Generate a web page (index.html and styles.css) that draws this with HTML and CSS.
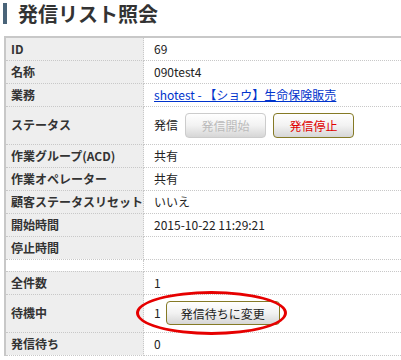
FILE: index.html
```html
<!DOCTYPE html>
<html lang="ja">
<head>
    <meta charset="UTF-8">
    <meta name="viewport" content="width=device-width, initial-scale=1.0">
    <title>発信リスト照会</title>
    <link rel="stylesheet" href="styles.css">
</head>
<body>
    <h1 class="page-title">発信リスト照会</h1>
    <table class="detail">
        <tr><th>ID</th><td>69</td></tr>
        <tr><th>名称</th><td>090test4</td></tr>
        <tr><th>業務</th><td><a href="#">shotest - 【ショウ】生命保険販売</a></td></tr>
        <tr class="tall">
            <th>ステータス</th>
            <td>
                <div class="status">
                    <span>発信</span>
                    <button class="btn disabled" disabled>発信開始</button>
                    <button class="btn stop">発信停止</button>
                </div>
            </td>
        </tr>
        <tr><th>作業グループ(ACD)</th><td>共有</td></tr>
        <tr><th>作業オペレーター</th><td>共有</td></tr>
        <tr><th>顧客ステータスリセット</th><td>いいえ</td></tr>
        <tr><th>開始時間</th><td>2015-10-22 11:29:21</td></tr>
        <tr><th>停止時間</th><td></td></tr>
        <tr class="spacer"><th></th><td></td></tr>
        <tr><th>全件数</th><td>1</td></tr>
        <tr class="tall">
            <th>待機中</th>
            <td>
                <div class="waiting">
                    <span>1</span>
                    <button class="btn change">発信待ちに変更</button>
                    <span class="mark"></span>
                </div>
            </td>
        </tr>
        <tr><th>発信待ち</th><td>0</td></tr>
    </table>
</body>
</html>
```

FILE: styles.css
```css
* {
    box-sizing: border-box;
}

body {
    margin: 0;
    background: #fff;
    color: #222;
    font-family: "Noto Sans CJK JP", sans-serif;
    font-size: 12px;
}

.page-title {
    margin: 3px 0 0 3px;
    padding: 0 0 0 11px;
    height: 21px;
    line-height: 21px;
    border-left: 4px solid #4a6479;
    font-size: 20px;
    font-weight: bold;
    color: #333;
}

.detail {
    margin: 12px 0 0 4px;
    width: 397px;
    border-collapse: collapse;
    border-top: 2px solid #c8c8c8;
    border-left: 2px solid #c8c8c8;
}

.detail th,
.detail td {
    height: 23px;
    padding: 0;
    border-bottom: 1px dotted #c8c8c8;
    vertical-align: middle;
    font-size: 12px;
    line-height: 14px;
}

.detail th {
    width: 137px;
    padding-left: 5px;
    text-align: left;
    font-weight: bold;
    color: #333;
    background: #eee;
    border-right: 1px dotted #c8c8c8;
    white-space: nowrap;
}

.detail td {
    padding-left: 10px;
    color: #222;
}

.detail a {
    color: #0033cc;
}

.detail .tall th,
.detail .tall td {
    height: 38px;
}

.detail .spacer th,
.detail .spacer td {
    height: 12px;
    background: #fff;
}

.status,
.waiting {
    display: flex;
    align-items: center;
    gap: 7px;
}

.waiting {
    position: relative;
    gap: 5px;
}

.btn {
    height: 25px;
    padding: 0;
    border: 1px solid #857a26;
    border-radius: 4px;
    background: linear-gradient(#fff, #f2f2f2 50%, #d6d6d6);
    font-family: "Noto Sans CJK JP", sans-serif;
    font-size: 12px;
    color: #222;
    cursor: pointer;
}

.btn.disabled {
    width: 81px;
    border-color: #ccc;
    color: #bbb;
    cursor: default;
}

.btn.stop {
    width: 81px;
    color: #e00000;
}

.btn.change {
    width: 114px;
    height: 24px;
}

.mark {
    position: absolute;
    left: -18px;
    top: -10px;
    width: 151px;
    height: 44px;
    border: 3px solid #e60000;
    border-radius: 50%;
    pointer-events: none;
}
```
